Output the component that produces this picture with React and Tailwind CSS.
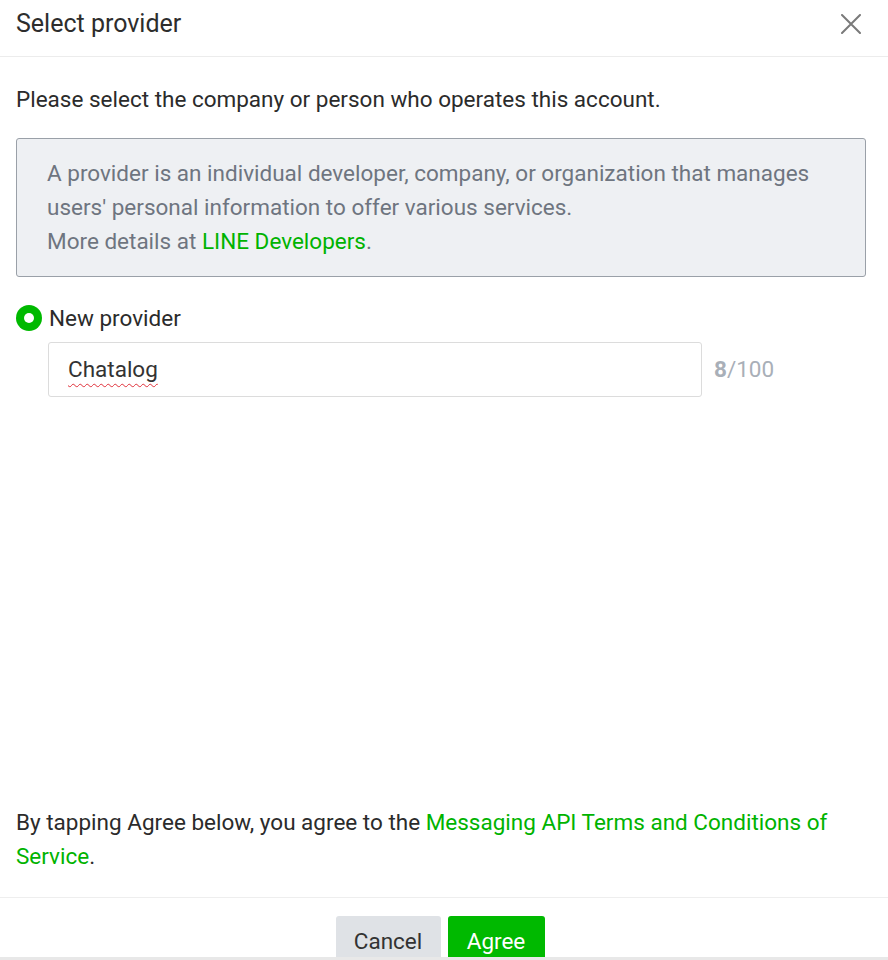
export default function App() {
  return (
    <div
      className="h-[960px] w-[888px] overflow-hidden bg-white flex flex-col text-[#1e1e1e]"
      style={{ fontFamily: "Roboto, 'Noto Sans', sans-serif" }}
    >
      {/* Header */}
      <div className="h-[57px] shrink-0 flex items-center justify-between pl-4 pr-[27px] pb-[9px] border-b border-[#ececec]">
        <h1 className="text-[25px] text-[#2d2d2d]">Select provider</h1>
        <svg width="20" height="20" viewBox="0 0 20 20" className="text-[#7a7a7a]">
          <path d="M1 1L19 19M19 1L1 19" stroke="currentColor" strokeWidth="2" strokeLinecap="round" />
        </svg>
      </div>

      <div className="flex-1 flex flex-col px-4">
        <p className="mt-[25px] text-[22.5px] leading-[34px] text-[#2b2b2b]">
          Please select the company or person who operates this account.
        </p>

        <div className="mt-[22px] mr-[6px] bg-[#eef0f3] border border-[#9aa0a8] rounded-[3px] pl-[30px] pr-4 pt-[17px] pb-[18px] text-[22.5px] leading-[34px] text-[#6e7580]">
          <p>A provider is an individual developer, company, or organization that manages users' personal information to offer various services.</p>
          <p>
            More details at <span className="text-[#00b300]">LINE Developers</span>.
          </p>
        </div>

        <label className="mt-[24px] flex items-center gap-[7px]">
          <span className="w-[26px] h-[26px] rounded-full bg-[#00b900] flex items-center justify-center">
            <span className="w-[10px] h-[10px] rounded-full bg-white" />
          </span>
          <span className="text-[22.5px] leading-[34px] text-[#2b2b2b]">New provider</span>
        </label>

        <div className="mt-[7px] ml-[32px] flex items-center gap-3">
          <div className="w-[654px] h-[55px] border border-[#dcdcdc] rounded-[3px] flex items-center pl-[19px] text-[22.5px] text-[#333]">
            <span className="underline decoration-wavy decoration-[#e0303a] decoration-1 underline-offset-[6px]">Chatalog</span>
          </div>
          <span className="text-[22.5px] text-[#a9afb8]">
            <span className="font-bold">8</span>/100
          </span>
        </div>

        <div className="flex-1" />

        <p className="text-[22.5px] leading-[34px] text-[#2b2b2b] mb-[24px] pr-[20px]">
          By tapping Agree below, you agree to the{" "}
          <span className="text-[#00b300]">Messaging API Terms and Conditions of Service</span>.
        </p>
      </div>

      {/* Footer */}
      <div className="h-[63px] shrink-0 border-t border-[#eeeeee] flex justify-center items-start gap-[7px] pt-[18px] pr-[8px] relative">
        <button className="w-[105px] h-[50px] rounded-[3px] bg-[#dfe2e6] text-[22.5px] text-[#333] pt-[2px]">Cancel</button>
        <button className="w-[97px] h-[50px] rounded-[3px] bg-[#00b900] text-[22.5px] text-white pt-[2px]">Agree</button>
        <div className="absolute left-0 right-0 bottom-0 h-[3px] bg-[#e8e8e8]" />
      </div>
    </div>
  );
}
